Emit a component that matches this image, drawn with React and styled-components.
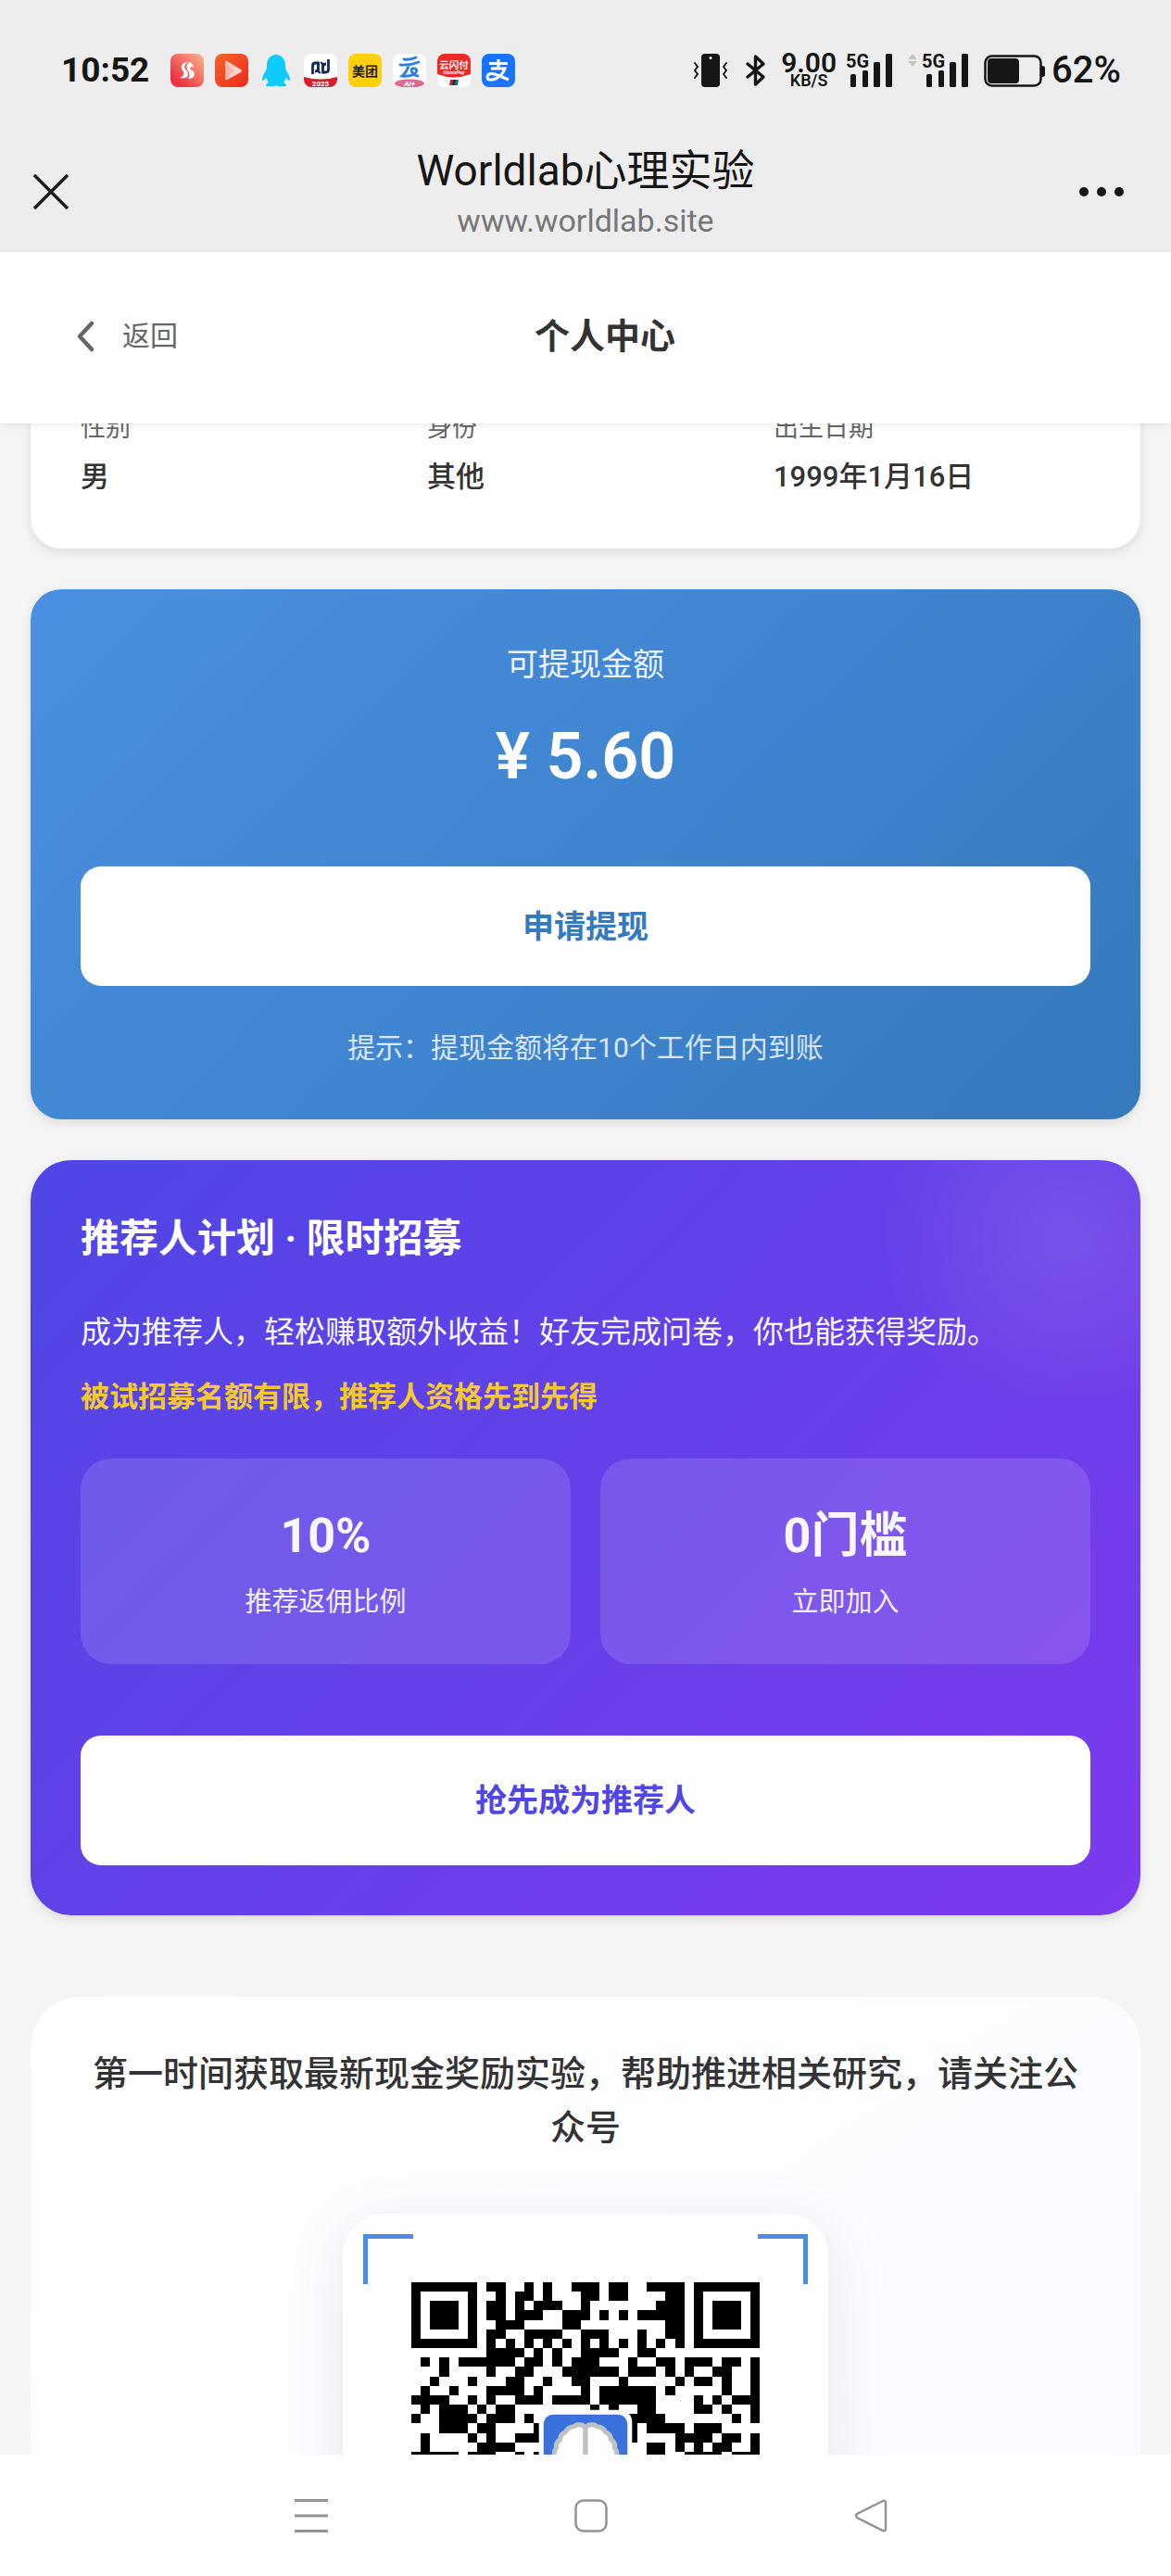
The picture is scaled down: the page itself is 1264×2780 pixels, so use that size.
import React from "react";
import styled, { createGlobalStyle, css } from "styled-components";

const GlobalStyle = createGlobalStyle`
  * { box-sizing: border-box; }
  body {
    margin: 0;
    background: #f5f5f5;
    color: #333;
    font-family: Roboto, "Noto Sans CJK SC", sans-serif;
  }
  h1, h2, p, dl, dd, dt { margin: 0; font-weight: inherit; }
  button { font-family: inherit; border: 0; padding: 0; background: none; color: inherit; cursor: pointer; }
  svg { display: block; flex: none; overflow: visible; }
`;

const Screen = styled.div`
  display: flex;
  flex-direction: column;
  height: 100vh;
  overflow: hidden;
`;

/* ---------- system status bar ---------- */

const StatusBar = styled.div`
  display: flex;
  align-items: center;
  justify-content: space-between;
  height: 152px;
  flex: none;
  padding: 0 54px 0 66px;
  background: #ededed;
  color: #161616;
`;

const StatusGroup = styled.div`
  display: flex;
  align-items: center;
  gap: ${(p) => p.$gap}px;
`;

const Clock = styled.span`
  margin-right: 11px;
  font-size: 37px;
  line-height: 40px;
  font-weight: 700;
`;

const NetSpeed = styled.span`
  display: flex;
  flex-direction: column;
  align-items: center;
  font-size: 30px;
  line-height: 22px;
  font-weight: 600;
  small {
    font-size: 18px;
    line-height: 16px;
  }
`;

const BatteryText = styled.span`
  font-size: 40px;
  line-height: 40px;
  font-weight: 500;
`;

/* ---------- browser title bar ---------- */

const TitleBar = styled.header`
  display: flex;
  align-items: center;
  justify-content: space-between;
  height: 120px;
  flex: none;
  padding: 0 32px 10px;
  background: #ededed;
  color: #161616;
`;

const IconButton = styled.button`
  display: flex;
  align-items: center;
  width: 68px;
  height: 56px;
`;

const TitleText = styled.div`
  text-align: center;
`;

const SiteTitle = styled.h1`
  font-size: 46px;
  line-height: 62px;
`;

const SiteUrl = styled.p`
  font-size: 34px;
  line-height: 46px;
  color: #777;
`;

/* ---------- page header ---------- */

const PageHeader = styled.div`
  position: relative;
  z-index: 1;
  display: flex;
  align-items: center;
  justify-content: space-between;
  height: 185px;
  flex: none;
  padding: 0 82px 4px;
  background: #fff;
  box-shadow: 0 2px 8px rgba(0, 0, 0, 0.08);
`;

const BackButton = styled.button`
  display: flex;
  align-items: center;
  gap: 30px;
  font-size: 30px;
  line-height: 44px;
  color: #666;
`;

const PageTitle = styled.h2`
  font-size: 38px;
  line-height: 56px;
  font-weight: 700;
`;

const HeaderSpacer = styled.span`
  width: 68px;
`;

/* ---------- scrolling content ---------- */

const Scroller = styled.main`
  flex: 1;
  min-height: 0;
  overflow: hidden;
  padding: 0 33px;
`;

const Content = styled.div`
  display: flex;
  flex-direction: column;
  gap: 44px;
  margin-top: -69px;
`;

const Card = styled.section`
  border-radius: 33px;
  padding: 54px;
  box-shadow: 0 4px 12px rgba(0, 0, 0, 0.1);
`;

const InfoCard = styled(Card)`
  background: #fff;
`;

const InfoGrid = styled.dl`
  display: grid;
  grid-template-columns: repeat(3, 1fr);
  gap: 32px;
`;

const InfoItem = styled.div`
  dt {
    margin-bottom: 10px;
    font-size: 27px;
    line-height: 40px;
    color: #666;
  }
  dd {
    font-size: 31px;
    line-height: 46px;
    font-weight: 500;
  }
`;

const BalanceCard = styled(Card)`
  background: linear-gradient(135deg, #4a90e2, #357abd);
  color: #fff;
  text-align: center;
`;

const BalanceLabel = styled.p`
  font-size: 34px;
  line-height: 54px;
  opacity: 0.9;
`;

const BalanceAmount = styled.p`
  margin: 30px 0 77px;
  font-size: 70px;
  line-height: 84px;
  font-weight: 600;
`;

const ActionButton = styled.button`
  display: block;
  width: 100%;
  height: ${(p) => (p.$tall ? 140 : 129)}px;
  border-radius: 22px;
  background: #fff;
  color: ${(p) => p.$color};
  font-size: 34px;
  line-height: 50px;
  font-weight: 700;
`;

const BalanceTip = styled.p`
  margin-top: 44px;
  font-size: 30px;
  line-height: 46px;
  opacity: 0.8;
`;

const ReferralCard = styled(Card)`
  border-radius: 44px;
  background:
    radial-gradient(circle at calc(100% - 82px) 82px, rgba(255, 255, 255, 0.1), transparent 200px),
    linear-gradient(135deg, #4f46e5, #7c3aed);
  color: #fff;
`;

const ReferralTitle = styled.h2`
  font-size: 42px;
  line-height: 62px;
  font-weight: 700;
`;

const ReferralText = styled.p`
  margin-top: 42px;
  font-size: 33px;
  line-height: 56px;
  opacity: 0.95;
`;

const ReferralNotice = styled.p`
  margin-top: 18px;
  font-size: 31px;
  line-height: 48px;
  font-weight: 700;
  color: #f4c92f;
`;

const Stats = styled.div`
  display: grid;
  grid-template-columns: repeat(2, 1fr);
  gap: 32px;
  margin: 42px 0 77px;
`;

const Stat = styled.div`
  padding: 44px;
  border-radius: 33px;
  background: rgba(255, 255, 255, 0.13);
  text-align: center;
  strong {
    display: block;
    margin-bottom: 8px;
    font-size: 52px;
    line-height: 80px;
    font-weight: 700;
    opacity: 0.95;
  }
  span {
    display: block;
    font-size: 29px;
    line-height: 46px;
    opacity: 0.9;
  }
`;

const FollowSection = styled.section`
  margin-top: 44px;
  padding: 54px;
  border-radius: 54px;
  background: linear-gradient(145deg, #ffffff, #f8faff);
  text-align: center;
`;

const FollowText = styled.p`
  font-size: 38px;
  line-height: 58px;
  font-weight: 500;
`;

const QrFrame = styled.div`
  position: relative;
  width: 524px;
  margin: 64px auto 0;
  padding: 74px;
  border-radius: 44px;
  background: #fff;
  box-shadow: 0 12px 64px rgba(60, 70, 130, 0.12);
`;

const Corner = styled.span`
  position: absolute;
  top: 22px;
  width: 54px;
  height: 54px;
  border-top: 5px solid #4a90e2;
  ${(p) =>
    p.$right
      ? css`right: 22px; border-right: 5px solid #4a90e2;`
      : css`left: 22px; border-left: 5px solid #4a90e2;`}
`;

/* ---------- system navigation ---------- */

const NavBar = styled.nav`
  display: flex;
  align-items: center;
  justify-content: center;
  gap: 246px;
  height: 131px;
  flex: none;
  padding-left: 12px;
  background: #fff;
`;

const NavButton = styled.button`
  display: flex;
  justify-content: center;
  width: 56px;
  padding: 10px 0;
`;

/* ---------- drawings ---------- */

const QR_ROWS = [
  "#######.##..#.#..###.##..####.#######",
  "#.....#..#.##.#...##.##....##.#.....#",
  "#.###.#.##.#.###..#.......###.#.###.#",
  "#.###.#.##.###..###.#.#.#####.#.###.#",
  "#.###.#..###....##.........##.#.###.#",
  "#.....#.##..####..###...#..##.#.....#",
  "#######.#.#.#.#.#.#.#.#.#.#.#.#######",
  "........####.#.#..####..##...........",
  ".#.#.######.##.#.###...#..##.###.##.#",
  "...#....#..##...######.###.#.#..##..#",
  "..#...#...##..#..##...#.....#.##.#..#",
  ".#..#...####.#....#.######.#.....#..#",
  "####..#.#..###.####.######....#.#.###",
  ".#.###.#.##........#.#..##....##.#..#",
  "#..####.###.#..........####.......#.#",
  "...###.##....#.........#.####.###....",
  ".#....#.#..###.........#....####.##.#",
  ".#.....####..............##.#.#.##..#",
  "#####.###..#.#...........##..####.###",
];

const qrPath = QR_ROWS.map((row, y) =>
  [...row.matchAll(/#+/g)].map((m) => `M${m.index} ${y}h${m[0].length}v1h-${m[0].length}z`).join("")
).join("");

const brainHalf =
  "M18.5 15.400q-.6-.5-1.200-.1q-.7.1-.9.6q-.6.2-.6.8q-.5.3-.4.9q-.4.5-.1 1.100q-.1 1.800.8 2.200q.6 1.300 2.400 1z";

function QrCode() {
  return (
    <svg width="376" height="376" viewBox="0 0 37 37" role="img" aria-label="公众号二维码">
      <path d={qrPath} fill="#000" shapeRendering="crispEdges" />
      <rect x="13.550" y="13.550" width="9.900" height="9.900" rx="1.300" fill="#fff" />
      <rect x="14.050" y="14.050" width="8.900" height="8.900" rx="1" fill="#3a72dd" />
      <g fill="#fff" stroke="#bfc1c3" strokeWidth=".5" strokeLinejoin="round">
        <path d={brainHalf} />
        <path d={brainHalf} transform="translate(37 0) scale(-1 1)" />
      </g>
    </svg>
  );
}

function AppIcon({ id, fill, children }) {
  return (
    <svg width="36" height="36" viewBox="0 0 36 36" aria-hidden="true">
      <clipPath id={id}>
        <rect width="36" height="36" rx="8" />
      </clipPath>
      <g clipPath={`url(#${id})`}>
        {fill && <rect width="36" height="36" fill={fill} />}
        {children}
      </g>
    </svg>
  );
}

const cjkBold = { fontFamily: '"Noto Sans CJK SC", sans-serif', fontWeight: 700, textAnchor: "middle" };

function AppIcons() {
  return (
    <>
      <AppIcon id="a1" fill="url(#g1)">
        <defs>
          <linearGradient id="g1" x1="0" y1="1" x2="1" y2="0">
            <stop offset=".2" stopColor="#ee3344" />
            <stop offset="1" stopColor="#fbb98c" />
          </linearGradient>
        </defs>
        <path d="M19 9c-5 0-8 3-7 7 1 3 4 4 2 7-1 2-3 2-4 3 5 1 9 0 9-4 0-4-4-5-4-8 0-2 2-4 4-5z" fill="#fff" />
        <path d="M20 9c4 1 5 4 5 6-1-1-4-1-4 1 1 2 5 2 5 6 0 3-3 5-7 5 2-2 2-5 1-7-2-3-4-6 0-11z" fill="#fff" />
      </AppIcon>
      <AppIcon id="a2" fill="url(#g2)">
        <defs>
          <linearGradient id="g2" x1="0" y1="0" x2="1" y2="1">
            <stop stopColor="#f2662c" />
            <stop offset="1" stopColor="#ef2a1b" />
          </linearGradient>
        </defs>
        <path d="M11 9v18q0 2 2 1l15-8q2-2 0-3L13 8q-2-1-2 1z" fill="#fcd4cd" />
        <path d="M11 9v18q0 1 1 1l9-10z" fill="#f9b4a6" />
      </AppIcon>
      <svg width="36" height="36" viewBox="0 0 36 36" aria-hidden="true">
        <path
          d="M18 1c-6 0-10 5-10 11v4c-2 4-5 8-5 12 0 2 2 1 4-2l3 5c-2 1-3 2-3 4h9l2-1 2 1h9c0-2-1-3-3-4l3-5c2 3 4 4 4 2 0-4-3-8-5-12v-4C28 6 24 1 18 1z"
          fill="#0ecbfb"
        />
      </svg>
      <AppIcon id="a4" fill="#fff">
        <path d="M9.500 22V13q0-3 3-3h3v6q0 3-3.500 3" fill="none" stroke="#14275e" strokeWidth="2.800" />
        <path d="M26.500 6v11q0 3-3 3h-3v-6q0-3 3.500-3" fill="none" stroke="#14275e" strokeWidth="2.800" />
        <path d="M15.500 14v3q0 3.500 2.500 3.500M20.500 16v-3q0-3.500-2.500-3.500" fill="none" stroke="#14275e" strokeWidth="2" />
        <path d="M0 25q18 5 36 0v11H0z" fill="#d61f2c" />
        <text x="18" y="34.500" fontSize="8" fontWeight="700" textAnchor="middle" fill="#fff">2025</text>
      </AppIcon>
      <AppIcon id="a5" fill="#ffd10d">
        <text x="18" y="23.500" fontSize="14" fill="#222" style={cjkBold}>美团</text>
      </AppIcon>
      <AppIcon id="a6" fill="#fff">
        <path d="M12 6q7 1 13-2M8 12q10 1 20-3M17 13q-2 7-7 11 8 1 13-2 5-4 1-6-4-1-4 2 1 5 7 6" fill="none" stroke="#2a7fe3" strokeWidth="2.800" strokeLinecap="round" />
        <ellipse cx="18" cy="32" rx="16" ry="4.500" fill="#dc6b93" />
        <text x="18" y="35" fontSize="8" fontWeight="700" fontStyle="italic" textAnchor="middle" fill="#fff">AI+</text>
      </AppIcon>
      <AppIcon id="a7" fill="#fff">
        <path d="M0 0h36v22q-18 7-36 0z" fill="#ee2a24" />
        <text x="18" y="15.500" fontSize="10.500" fill="#fff" style={cjkBold}>云闪付</text>
        <text x="18" y="22" fontSize="5.500" fontStyle="italic" fontWeight="700" textAnchor="middle" fill="#fff">UnionPay</text>
        <path d="M14 28h4l-1 6h-4z" fill="#c8262b" />
        <path d="M17 28h4l-1 6h-4z" fill="#1b2c4f" />
        <path d="M20 28h3l-1 6h-3z" fill="#0d7d78" />
      </AppIcon>
      <AppIcon id="a8" fill="#1a73fb">
        <path d="M18 6v9M8 10.500h20M10 16h15q-3 8-10 11-9 3-9-2 1-5 8-3 8 3 15 6" fill="none" stroke="#fff" strokeWidth="3" />
      </AppIcon>
    </>
  );
}

function VibrateIcon() {
  return (
    <svg width="36" height="36" viewBox="0 0 36 36" aria-hidden="true">
      <rect x="8" width="20" height="36" rx="4" fill="#161616" />
      <circle cx="18" cy="4.500" r="1.500" fill="#ededed" />
      <path d="M1 10l3 4-3 4 3 4-3 4M35 10l-3 4 3 4-3 4 3 4" fill="none" stroke="#161616" strokeWidth="2" strokeLinejoin="round" strokeLinecap="round" />
    </svg>
  );
}

function BluetoothIcon() {
  return (
    <svg width="22" height="36" viewBox="0 0 22 36" aria-hidden="true">
      <path d="M2 11l17 14-8.500 8V3l8.500 8L2 25" fill="none" stroke="#161616" strokeWidth="3.400" strokeLinejoin="round" strokeLinecap="round" />
    </svg>
  );
}

function SignalIcon() {
  return (
    <svg width="51" height="37" viewBox="0 0 51 37" aria-hidden="true">
      <text x="0" y="15" fontSize="20" fontWeight="700" fill="#161616">5G</text>
      <g fill="#161616">
        <rect x="5" y="22" width="6" height="14" rx="1.500" />
        <rect x="18" y="18" width="6" height="18" rx="1.500" />
        <rect x="30" y="9" width="7" height="27" rx="1.500" />
        <rect x="43" y="0" width="7" height="36" rx="1.500" />
      </g>
    </svg>
  );
}

function DataArrows() {
  return (
    <svg width="10" height="36" viewBox="0 0 10 36" aria-hidden="true">
      <path d="M5 0l5 6H0zM5 14l5-6H0z" fill="#c4c4c4" />
    </svg>
  );
}

function BatteryIcon() {
  return (
    <svg width="67" height="36" viewBox="0 0 67 36" aria-hidden="true">
      <rect x="1.500" y="2.500" width="60" height="32" rx="7" fill="none" stroke="#161616" strokeWidth="2.500" />
      <rect x="4" y="5" width="34" height="27" rx="4" fill="#161616" />
      <path d="M62 13q4 0 4 2v8q0 2-4 2z" fill="#161616" />
    </svg>
  );
}

export default function App() {
  return (
    <Screen>
      <GlobalStyle />
      <StatusBar>
        <StatusGroup $gap={12}>
          <Clock>10:52</Clock>
          <AppIcons />
        </StatusGroup>
        <StatusGroup $gap={16}>
          <StatusGroup $gap={20}>
            <VibrateIcon />
            <BluetoothIcon />
          </StatusGroup>
          <StatusGroup $gap={10}>
            <NetSpeed>
              9.00<small>KB/S</small>
            </NetSpeed>
            <SignalIcon />
          </StatusGroup>
          <StatusGroup $gap={5}>
            <DataArrows />
            <SignalIcon />
          </StatusGroup>
          <StatusGroup $gap={6}>
            <BatteryIcon />
            <BatteryText>62%</BatteryText>
          </StatusGroup>
        </StatusGroup>
      </StatusBar>

      <TitleBar>
        <IconButton type="button" aria-label="关闭">
          <svg width="46" height="46" viewBox="0 0 46 46">
            <path d="M5 5l36 36M41 5L5 41" stroke="#1c1c1c" strokeWidth="3.500" />
          </svg>
        </IconButton>
        <TitleText>
          <SiteTitle>Worldlab心理实验</SiteTitle>
          <SiteUrl>www.worldlab.site</SiteUrl>
        </TitleText>
        <IconButton type="button" aria-label="更多">
          <svg width="50" height="12" viewBox="0 0 50 12">
            <circle cx="6" cy="6" r="5" fill="#161616" />
            <circle cx="25" cy="6" r="5" fill="#161616" />
            <circle cx="44" cy="6" r="5" fill="#161616" />
          </svg>
        </IconButton>
      </TitleBar>

      <PageHeader>
        <BackButton type="button">
          <svg width="20" height="34" viewBox="0 0 20 34" aria-hidden="true">
            <path d="M17 3L4 17l13 14" fill="none" stroke="#666" strokeWidth="4.500" strokeLinecap="round" strokeLinejoin="round" />
          </svg>
          返回
        </BackButton>
        <PageTitle>个人中心</PageTitle>
        <HeaderSpacer />
      </PageHeader>

      <Scroller>
        <Content>
          <InfoCard>
            <InfoGrid>
              <InfoItem>
                <dt>性别</dt>
                <dd>男</dd>
              </InfoItem>
              <InfoItem>
                <dt>身份</dt>
                <dd>其他</dd>
              </InfoItem>
              <InfoItem>
                <dt>出生日期</dt>
                <dd>1999年1月16日</dd>
              </InfoItem>
            </InfoGrid>
          </InfoCard>

          <BalanceCard>
            <BalanceLabel>可提现金额</BalanceLabel>
            <BalanceAmount>¥ 5.60</BalanceAmount>
            <ActionButton type="button" $color="#357abd">申请提现</ActionButton>
            <BalanceTip>提示：提现金额将在10个工作日内到账</BalanceTip>
          </BalanceCard>

          <ReferralCard>
            <ReferralTitle>推荐人计划 · 限时招募</ReferralTitle>
            <ReferralText>成为推荐人，轻松赚取额外收益！好友完成问卷，你也能获得奖励。</ReferralText>
            <ReferralNotice>被试招募名额有限，推荐人资格先到先得</ReferralNotice>
            <Stats>
              <Stat>
                <strong>10%</strong>
                <span>推荐返佣比例</span>
              </Stat>
              <Stat>
                <strong>0门槛</strong>
                <span>立即加入</span>
              </Stat>
            </Stats>
            <ActionButton type="button" $tall $color="#4f46e5">抢先成为推荐人</ActionButton>
          </ReferralCard>

          <FollowSection>
            <FollowText>第一时间获取最新现金奖励实验，帮助推进相关研究，请关注公众号</FollowText>
            <QrFrame>
              <Corner />
              <Corner $right />
              <QrCode />
            </QrFrame>
          </FollowSection>
        </Content>
      </Scroller>

      <NavBar>
        <NavButton type="button" aria-label="最近任务">
          <svg width="36" height="36" viewBox="0 0 36 36">
            <path d="M0 1.500h36M0 18h36M0 34.500h36" stroke="#939393" strokeWidth="3" />
          </svg>
        </NavButton>
        <NavButton type="button" aria-label="主屏幕">
          <svg width="36" height="36" viewBox="0 0 36 36">
            <rect x="1.500" y="1.500" width="33" height="33" rx="8" fill="none" stroke="#939393" strokeWidth="2.500" />
          </svg>
        </NavButton>
        <NavButton type="button" aria-label="返回上一级">
          <svg width="36" height="36" viewBox="0 0 36 36">
            <path d="M31 2L3 16q-2 2 0 4l28 14q3 1 3-2V4q0-3-3-2z" fill="none" stroke="#939393" strokeWidth="2.500" />
          </svg>
        </NavButton>
      </NavBar>
    </Screen>
  );
}
